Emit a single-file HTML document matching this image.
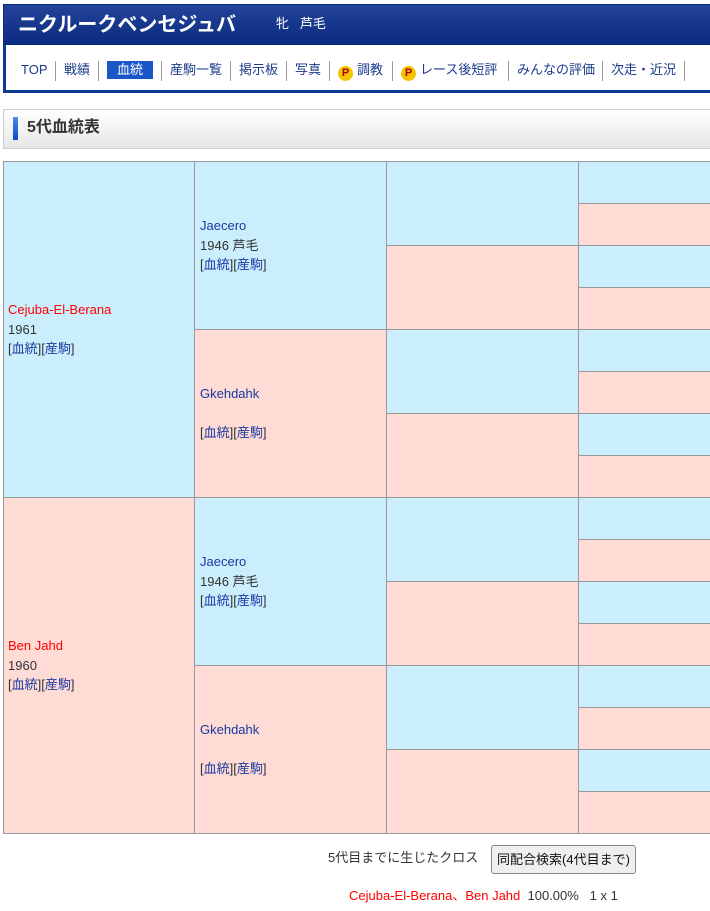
<!DOCTYPE html>
<html><head><meta charset="utf-8"><style>
*{margin:0;padding:0;box-sizing:border-box}
body{width:710px;height:911px;overflow:hidden;background:#fff;font-family:"Liberation Sans","Noto Sans CJK JP",sans-serif;position:relative;font-size:12px;color:#333}
.a{position:absolute}
.hd{left:3px;top:4px;width:720px;height:42px;background:linear-gradient(#24449a,#0a2a80);border:1px solid #0a2a80}
.nav{left:3px;top:45px;width:720px;height:48px;border:3px solid #0a3a94;border-top:none;background:#fff}
.ni{position:absolute;top:61px;font-size:13px;color:#1a3a8a;line-height:17px}
.sep{position:absolute;top:61px;width:1px;height:20px;background:#999}
.p{display:inline-block;width:15px;height:15px;border-radius:50%;background:#f5c400;color:#a00;font-weight:bold;font-size:11px;text-align:center;line-height:15px;vertical-align:-2px;margin-right:4px}
.c{position:absolute;border-left:1px solid #999;border-top:1px solid #999}
.b{background:#cbeefd}.k{background:#ffdbd6}
.t{position:absolute;font-size:13px;line-height:19.5px;color:#333}
.t .n{color:#1a3aa0}.t .r{color:#f00}
.t .l{color:#1a3aa0}
</style></head><body>
<div class="a hd"></div>
<div class="a" style="left:18px;top:11px;color:#fff;font-size:20px;font-weight:bold;line-height:28px">ニクルークベンセジュバ</div>
<div class="a" style="left:276px;top:15px;color:#fff;font-size:13px;line-height:18px">牝&nbsp;&nbsp;&nbsp;芦毛</div>
<div class="a nav"></div>
<div class="ni" style="left:21px">TOP</div><div class="sep" style="left:55px"></div>
<div class="ni" style="left:64px">戦績</div><div class="sep" style="left:98px"></div>
<div class="a" style="left:107px;top:61px;width:46px;height:18px;background:#1a56c8;color:#fff;font-size:13px;text-align:center;line-height:18px">血統</div>
<div class="sep" style="left:161px"></div>
<div class="ni" style="left:170px">産駒一覧</div><div class="sep" style="left:230px"></div>
<div class="ni" style="left:239px">掲示板</div><div class="sep" style="left:286px"></div>
<div class="ni" style="left:295px">写真</div><div class="sep" style="left:329px"></div>
<div class="ni" style="left:338px"><span class="p">P</span>調教</div><div class="sep" style="left:392px"></div>
<div class="ni" style="left:401px"><span class="p">P</span>レース後短評</div><div class="sep" style="left:508px"></div>
<div class="ni" style="left:517px">みんなの評価</div><div class="sep" style="left:602px"></div>
<div class="ni" style="left:611px">次走・近況</div><div class="sep" style="left:684px"></div>
<div class="a" style="left:3px;top:109px;width:720px;height:40px;border:1px solid #ccc;background:linear-gradient(#fff,#e6e6e6)"></div>
<div class="a" style="left:13px;top:117px;width:5px;height:23px;background:linear-gradient(#4a8af0,#0a48c8)"></div>
<div class="a" style="left:27px;top:118px;font-size:16px;font-weight:bold;color:#333;line-height:20px">5代血統表</div>
<div id="tb"></div>
<div class="a" style="left:3px;top:833px;width:710px;height:1px;background:#999"></div>
<div class="t" style="left:8px;top:300px"><span class="r">Cejuba-El-Berana</span><br>1961<br>[<span class="l">血統</span>][<span class="l">産駒</span>]</div>
<div class="t" style="left:8px;top:636px"><span class="r">Ben Jahd</span><br>1960<br>[<span class="l">血統</span>][<span class="l">産駒</span>]</div>
<div class="t" style="left:200px;top:216px"><span class="n">Jaecero</span><br>1946 芦毛<br>[<span class="l">血統</span>][<span class="l">産駒</span>]</div>
<div class="t" style="left:200px;top:384px"><span class="n">Gkehdahk</span><br>&nbsp;<br>[<span class="l">血統</span>][<span class="l">産駒</span>]</div>
<div class="t" style="left:200px;top:552px"><span class="n">Jaecero</span><br>1946 芦毛<br>[<span class="l">血統</span>][<span class="l">産駒</span>]</div>
<div class="t" style="left:200px;top:720px"><span class="n">Gkehdahk</span><br>&nbsp;<br>[<span class="l">血統</span>][<span class="l">産駒</span>]</div>
<div class="a" style="left:328px;top:850px;font-size:13px;line-height:16px;color:#333">5代目までに生じたクロス</div>
<div class="a" style="left:491px;top:845px;width:145px;height:29px;border:1px solid #888;border-radius:3px;background:#efefef;font-size:13px;text-align:center;line-height:27px;color:#111;white-space:nowrap">同配合検索(4代目まで)</div>
<div class="a" style="left:349px;top:888px;font-size:13px;line-height:16px;color:#333"><span style="color:#f00">Cejuba-El-Berana、Ben Jahd</span>&nbsp;&nbsp;100.00%&nbsp;&nbsp;&nbsp;1 x 1</div>
<script>
var h='';var X=[3,194,386,578],W=[191,192,192,200],H=[336,168,84,42];
for(var g=0;g<4;g++){var n=2<<g;for(var i=0;i<n;i++){h+='<div class="c '+(i%2?'k':'b')+'" style="left:'+X[g]+'px;top:'+(161+i*H[g])+'px;width:'+W[g]+'px;height:'+H[g]+'px"></div>';}}
document.getElementById('tb').innerHTML=h;
</script>
</body></html>
